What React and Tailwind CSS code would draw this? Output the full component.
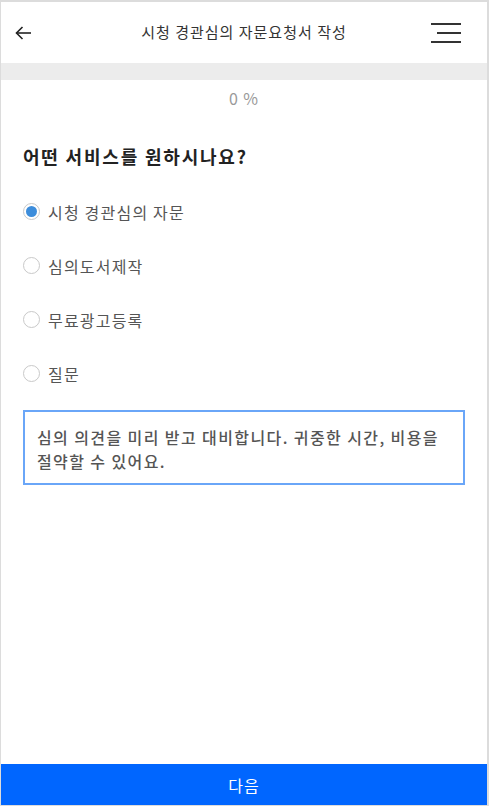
import React, { useState } from "react";

const font = { fontFamily: '"Noto Sans CJK KR", "Noto Sans", sans-serif' };

const options = ["시청 경관심의 자문", "심의도서제작", "무료광고등록", "질문"];

export default function App() {
  const [sel, setSel] = useState(0);
  return (
    <div
      className="w-[489px] h-[806px] bg-white border-t-2 border-l border-r-2 border-b border-[#dcdcdc] flex flex-col"
      style={font}
    >
      <header className="h-[61px] flex items-center justify-between shrink-0 relative">
        <div className="pl-[14px] w-[60px] flex items-center">
          <svg width="17" height="14" viewBox="0 0 17 14" fill="none" stroke="#222" strokeWidth="1.6">
            <path d="M16 7H1.5" />
            <path d="M7.5 1L1.5 7L7.5 13" />
          </svg>
        </div>
        <div className="text-[15px] text-[#333] tracking-[1px]">시청 경관심의 자문요청서 작성</div>
        <div className="w-[60px] flex flex-col items-end gap-[7px] pr-[26px]">
          <div className="w-[30px] h-[2px] bg-[#333]" />
          <div className="w-[24px] h-[2px] bg-[#333]" />
          <div className="w-[30px] h-[2px] bg-[#333]" />
        </div>
      </header>
      <div className="h-[17px] bg-[#ececec] shrink-0" />
      <div className="text-center text-[16px] text-[#999] mt-[8px] leading-[20px] tracking-[1px]">0 %</div>
      <div className="px-[22px] flex-1 flex flex-col">
        <h2 className="mt-[36px] text-[18px] font-bold text-[#222] leading-[24px] tracking-[1.8px]">어떤 서비스를 원하시나요?</h2>
        <div className="mt-[33px] flex flex-col gap-[33px]">
          {options.map((o, i) => (
            <label key={o} className="flex items-center gap-[8px] cursor-pointer h-[21px]" onClick={() => setSel(i)}>
              <span className="w-[17px] h-[17px] rounded-full border border-[#c9c9c9] flex items-center justify-center bg-white">
                {sel === i && <span className="w-[11px] h-[11px] rounded-full bg-[#3d8ddb]" />}
              </span>
              <span className="text-[16px] text-[#555] leading-[20px] tracking-[1.2px]">{o}</span>
            </label>
          ))}
        </div>
        <div className="mt-[26px] border-2 border-[#6aa6f8] px-[12px] pt-[13px] pb-[10px] text-[16px] font-medium text-[#555] leading-[24px] tracking-[1.4px]">
          심의 의견을 미리 받고 대비합니다. 귀중한 시간, 비용을 절약할 수 있어요.
        </div>
      </div>
      <button className="h-[41px] shrink-0 bg-[#0066ff] text-white text-[16px] flex items-center justify-center tracking-[1px]">
        다음
      </button>
    </div>
  );
}
